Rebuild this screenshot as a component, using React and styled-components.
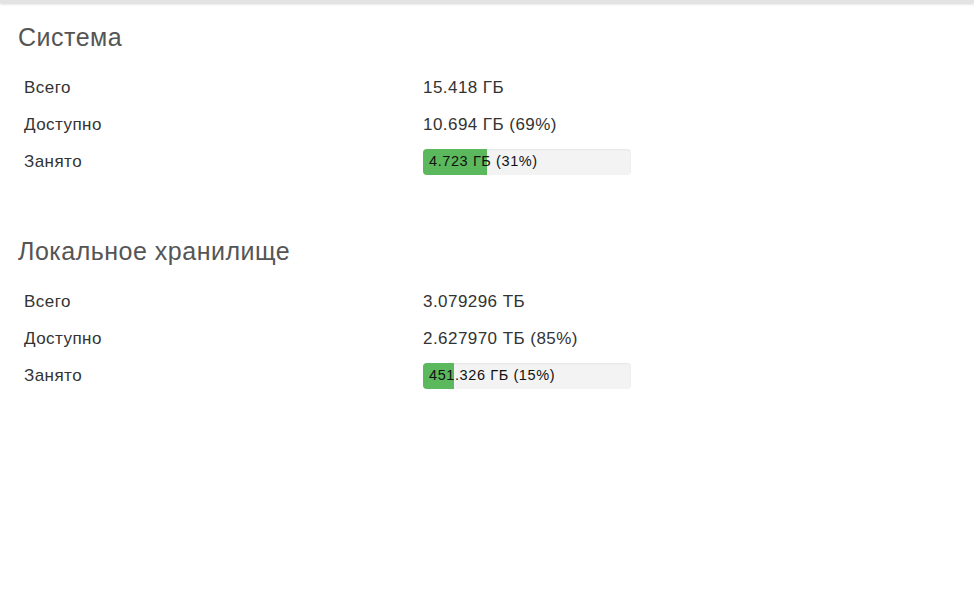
import React from "react";
import styled, { createGlobalStyle } from "styled-components";

const GlobalStyle = createGlobalStyle`
  html, body {
    margin: 0;
    padding: 0;
    background: #fff;
    font-family: "Liberation Sans", Arial, sans-serif;
    color: #333;
  }
`;

const TopBar = styled.div`
  height: 3px;
  background: #e3e3e3;
  box-shadow: 0 1px 3px rgba(0, 0, 0, 0.18);
`;

const Page = styled.div`
  padding: 0 18px;
`;

const Section = styled.section`
  margin-bottom: ${p => p.gap || 0}px;
`;

const Title = styled.h3`
  margin: 0;
  padding-top: ${p => p.top}px;
  font-size: 25px;
  font-weight: 400;
  line-height: 30px;
  letter-spacing: 0.5px;
  color: #555;
`;

const Table = styled.div`
  display: grid;
  grid-template-columns: 405px 1fr;
  margin-top: 17px;
`;

const Cell = styled.div`
  height: 37px;
  display: flex;
  align-items: center;
  padding: 0 6px;
  font-size: 17px;
  letter-spacing: 0.45px;
  color: #333;
  &:nth-child(2n) {
    padding: 0;
  }
`;

const Bar = styled.div`
  position: relative;
  width: 208px;
  height: 26px;
  background: #f3f3f3;
  border-radius: 4px;
  overflow: hidden;
  box-shadow: inset 0 1px 2px rgba(0, 0, 0, 0.06);
`;

const Fill = styled.div`
  height: 100%;
  background: #5cb85c;
`;

const BarText = styled.span`
  position: absolute;
  left: 6px;
  top: 0;
  line-height: 25px;
  font-size: 14.5px;
  letter-spacing: 0.6px;
  color: #111;
`;

const sections = [
  {
    title: "Система",
    top: 19,
    total: "15.418 ГБ",
    free: "10.694 ГБ (69%)",
    used: "4.723 ГБ (31%)",
    pct: 31,
  },
  {
    title: "Локальное хранилище",
    top: 0,
    total: "3.079296 ТБ",
    free: "2.627970 ТБ (85%)",
    used: "451.326 ГБ (15%)",
    pct: 15,
  },
];

const App = () => (
  <>
    <GlobalStyle />
    <TopBar />
    <Page>
      {sections.map((s, i) => (
        <Section key={s.title} gap={i === 0 ? 56 : 0}>
          <Title top={s.top}>{s.title}</Title>
          <Table>
            <Cell>Всего</Cell>
            <Cell>{s.total}</Cell>
            <Cell>Доступно</Cell>
            <Cell>{s.free}</Cell>
            <Cell>Занято</Cell>
            <Cell>
              <Bar>
                <Fill style={{ width: `${s.pct}%` }} />
                <BarText>{s.used}</BarText>
              </Bar>
            </Cell>
          </Table>
        </Section>
      ))}
    </Page>
  </>
);

export default App;
